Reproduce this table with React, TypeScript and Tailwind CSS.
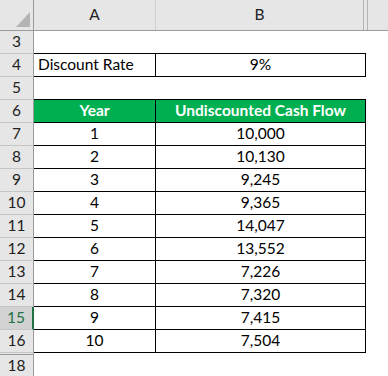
const rows = [
  { n: 7, year: '1', cash: '10,000' },
  { n: 8, year: '2', cash: '10,130' },
  { n: 9, year: '3', cash: '9,245' },
  { n: 10, year: '4', cash: '9,365' },
  { n: 11, year: '5', cash: '14,047' },
  { n: 12, year: '6', cash: '13,552' },
  { n: 13, year: '7', cash: '7,226' },
  { n: 14, year: '8', cash: '7,320' },
  { n: 15, year: '9', cash: '7,415' },
  { n: 16, year: '10', cash: '7,504' },
];

function RowHead({ n, selected = false }: { n: number; selected?: boolean }) {
  return (
    <div
      className={
        selected
          ? 'w-[34px] shrink-0 flex items-center justify-center bg-[#d2d2d2] text-[#217346] border-b border-b-[#c6c6c6] border-r-2 border-r-[#217346]'
          : 'w-[34px] shrink-0 flex items-center justify-center bg-[#e6e6e6] text-[#222] border-b border-b-[#c6c6c6] border-r border-r-[#9b9b9b]'
      }
    >
      {n}
    </div>
  );
}

export default function App() {
  return (
    <div
      className="w-[388px] h-[376px] bg-white overflow-hidden text-[15.5px] text-black leading-none"
      style={{ fontFamily: 'Lato, "Open Sans", sans-serif' }}
    >
      {/* column headers */}
      <div className="flex h-[31px] bg-[#e6e6e6] border-b border-[#9b9b9b]">
        <div className="relative w-[34px] shrink-0 border-r border-[#9b9b9b]">
          <svg className="absolute left-0 top-0" width="33" height="30" viewBox="0 0 33 30">
            <polygon points="16,27 30,12 30,27" fill="#b4b4b4" />
          </svg>
        </div>
        <div className="w-[122px] shrink-0 flex items-center justify-center border-r border-[#d0d0d0] text-[#222]">
          A
        </div>
        <div className="w-[208px] shrink-0 flex items-center justify-center border-r border-[#b4b4b4] text-[#222]">
          B
        </div>
        <div className="w-[4px] shrink-0 border-r border-[#b4b4b4]" />
        <div className="flex-1" />
      </div>

      {/* row 3 */}
      <div className="flex h-[23px]">
        <RowHead n={3} />
        <div className="w-[122px] shrink-0 border-b border-black" />
        <div className="w-[210px] shrink-0 border-b border-black" />
      </div>

      {/* row 4 */}
      <div className="flex h-[23px]">
        <RowHead n={4} />
        <div className="w-[122px] shrink-0 flex items-center pl-[4px] border-b border-r border-black">
          Discount Rate
        </div>
        <div className="w-[210px] shrink-0 flex items-center justify-center border-b border-r border-black">
          9%
        </div>
      </div>

      {/* row 5 */}
      <div className="flex h-[23px]">
        <RowHead n={5} />
        <div className="w-[122px] shrink-0 border-b border-black" />
        <div className="w-[210px] shrink-0 border-b border-black" />
      </div>

      {/* row 6 - table header */}
      <div className="flex h-[23px]">
        <RowHead n={6} />
        <div className="w-[122px] shrink-0 flex items-center justify-center bg-[#00b050] text-white font-bold border-b border-r border-black">
          Year
        </div>
        <div className="w-[210px] shrink-0 flex items-center justify-center bg-[#00b050] text-white font-bold border-b border-r border-black">
          Undiscounted Cash Flow
        </div>
      </div>

      {rows.map((r) => (
        <div key={r.n} className="flex h-[23px]">
          <RowHead n={r.n} selected={r.n === 15} />
          <div className="w-[122px] shrink-0 flex items-center justify-center border-b border-r border-black">
            {r.year}
          </div>
          <div className="w-[210px] shrink-0 flex items-center justify-center border-b border-r border-black">
            {r.cash}
          </div>
        </div>
      ))}

      {/* hidden row 17 */}
      <div className="flex h-[2px]">
        <div className="w-[34px] shrink-0 bg-[#e6e6e6] border-b border-b-[#9b9b9b] border-r border-r-[#9b9b9b]" />
      </div>

      {/* row 18 */}
      <div className="flex h-[22px]">
        <div className="w-[34px] shrink-0 flex items-center justify-center bg-[#e6e6e6] text-[#222] border-r border-[#9b9b9b]">
          18
        </div>
      </div>
    </div>
  );
}
